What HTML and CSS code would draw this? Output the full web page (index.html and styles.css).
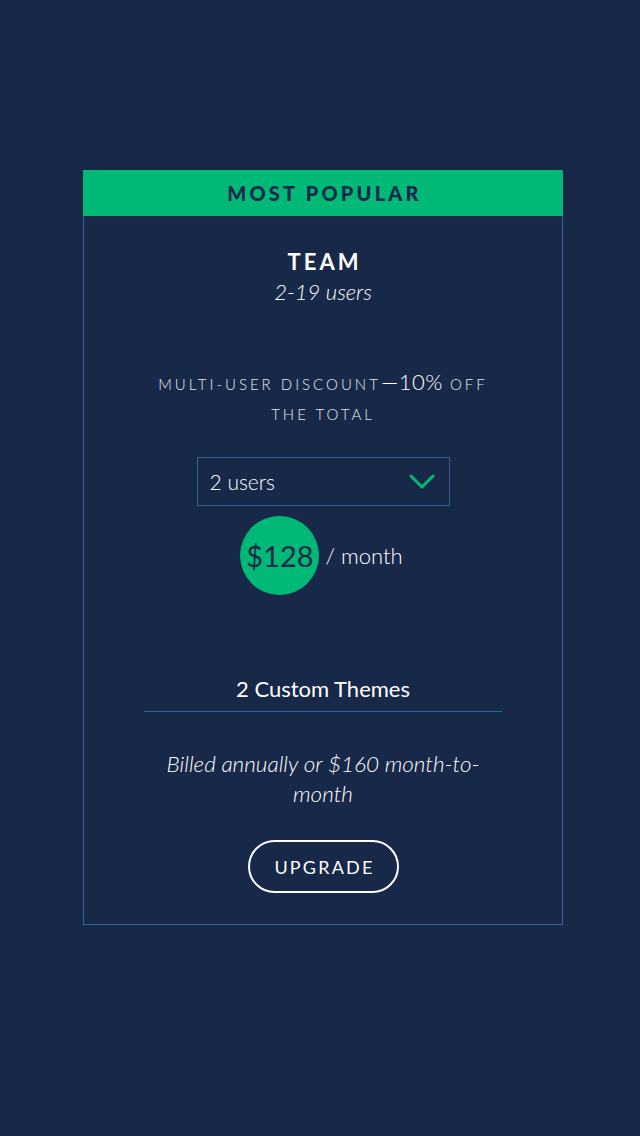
FILE: index.html
```html
<!DOCTYPE html>
<html lang="en">
<head>
<meta charset="utf-8">
<title>Team plan</title>
<link rel="stylesheet" href="styles.css">
</head>
<body>
<main class="page">
  <section class="card">
    <header class="card-header">MOST POPULAR</header>
    <div class="card-body">
      <h2 class="plan-name">TEAM</h2>
      <p class="plan-users">2-19 users</p>
      <p class="discount">MULTI-USER DISCOUNT<span class="big">—10%</span> OFF THE TOTAL</p>
      <div class="select">
        <span class="select-value">2 users</span>
        <svg class="chevron" width="26" height="16" viewBox="0 0 26 16"><path d="M2 2 L13 13 L24 2" fill="none" stroke="#00b976" stroke-width="3" stroke-linecap="round" stroke-linejoin="round"/></svg>
      </div>
      <div class="price-row">
        <span class="price">$128</span>
        <span class="per">/ month</span>
      </div>
      <p class="feature">2 Custom Themes</p>
      <p class="billing">Billed annually or $160 month-to-month</p>
      <button class="upgrade">UPGRADE</button>
    </div>
  </section>
</main>
</body>
</html>
```
FILE: styles.css
```css
html, body {
  margin: 0;
  padding: 0;
  background: #172849;
}
body {
  font-family: Lato, "Open Sans", sans-serif;
  color: #ffffff;
  min-height: 1136px;
}
.page {
  padding: 170px 0 0 83px;
}
.card {
  width: 480px;
  box-sizing: border-box;
}
.card-header {
  height: 46px;
  background: #00b976;
  color: #172849;
  font-weight: 900;
  font-size: 20px;
  letter-spacing: 3.2px;
  display: flex;
  align-items: center;
  justify-content: center;
  padding-left: 3px;
}
.card-body {
  border: 1px solid #2c67a3;
  border-top: none;
  padding: 31px 60px 31px;
  display: flex;
  flex-direction: column;
  align-items: center;
  text-align: center;
}
.plan-name {
  margin: 0;
  font-size: 22px;
  line-height: 30px;
  font-weight: 700;
  letter-spacing: 3px;
  padding-left: 3px;
}
.plan-users {
  margin: 0;
  font-size: 22px;
  line-height: 30px;
  font-style: italic;
  font-weight: 300;
}
.discount {
  margin: 62px 0 0;
  width: 350px;
  font-size: 15px;
  line-height: 30px;
  font-weight: 300;
  letter-spacing: 3px;
  color: #e3e8f0;
}
.discount .big {
  font-size: 22px;
  line-height: 1;
  font-weight: 300;
  letter-spacing: 0.5px;
  color: #ffffff;
}
.select {
  margin-top: 28px;
  width: 253px;
  height: 49px;
  box-sizing: border-box;
  border: 1px solid #3a5f8c;
  display: flex;
  align-items: center;
  justify-content: space-between;
  padding: 0 14px 0 12px;
}
.select-value {
  font-size: 21px;
  font-weight: 300;
}
.price-row {
  margin-top: 10px;
  display: flex;
  align-items: center;
  gap: 6px;
  padding-right: 3px;
}
.price {
  width: 79px;
  height: 79px;
  border-radius: 50%;
  background: #00b976;
  color: #172849;
  font-size: 29px;
  font-weight: 400;
  display: flex;
  align-items: center;
  justify-content: center;
}
.per {
  font-size: 22px;
  font-weight: 300;
}
.feature {
  margin: 79px 0 0;
  align-self: stretch;
  font-size: 22px;
  line-height: 30px;
  font-weight: 400;
  padding-bottom: 7px;
  border-bottom: 1px solid #2c67a3;
}
.billing {
  margin: 37px 0 0;
  font-size: 22.5px;
  line-height: 30px;
  font-style: italic;
  font-weight: 300;
}
.upgrade {
  margin-top: 31px;
  width: 151px;
  height: 53px;
  border: 2px solid #ffffff;
  border-radius: 27px;
  background: transparent;
  color: #ffffff;
  font-family: inherit;
  font-size: 18px;
  font-weight: 400;
  letter-spacing: 2.2px;
  padding: 0 0 0 3px;
}
```
